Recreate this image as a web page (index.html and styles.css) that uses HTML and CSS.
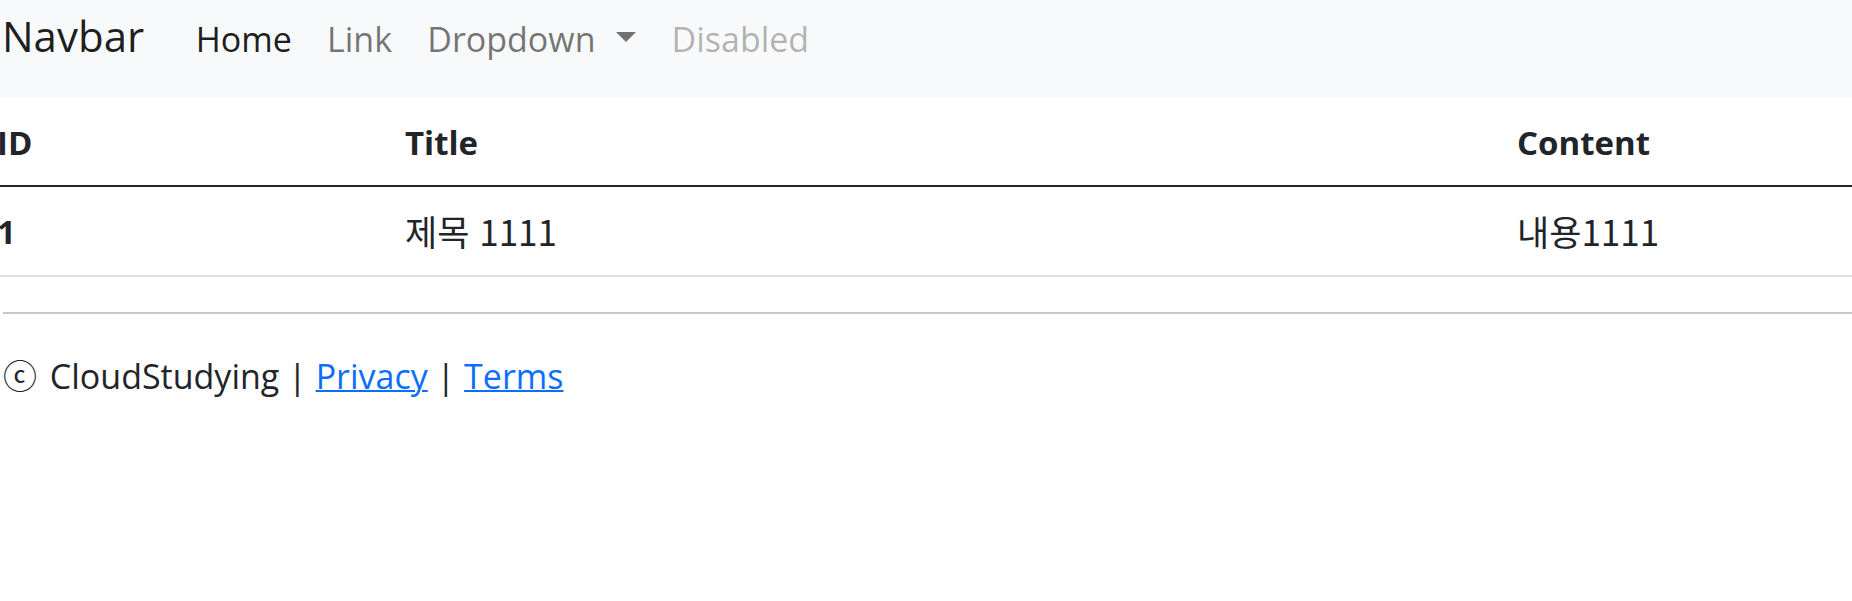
FILE: index.html
```html
<!DOCTYPE html>
<html lang="ko">
<head>
<meta charset="utf-8">
<title>Navbar</title>
<link rel="stylesheet" href="styles.css">
</head>
<body>
<nav class="navbar">
  <a class="brand" href="#">Navbar</a>
  <ul class="nav">
    <li><a class="nav-link active" href="#">Home</a></li>
    <li><a class="nav-link" href="#">Link</a></li>
    <li><a class="nav-link dropdown" href="#">Dropdown <span class="caret"></span></a></li>
    <li><a class="nav-link disabled" href="#">Disabled</a></li>
  </ul>
</nav>
<main class="content">
  <table class="table">
    <colgroup>
      <col class="col-id">
      <col class="col-title">
      <col class="col-content">
    </colgroup>
    <thead>
      <tr><th>ID</th><th>Title</th><th>Content</th></tr>
    </thead>
    <tbody>
      <tr><th class="row-id">1</th><td class="ko">제목 1111</td><td class="ko">내용1111</td></tr>
    </tbody>
  </table>
  <hr class="rule">
  <footer class="footer"><span class="copy">ⓒ</span> CloudStudying | <a href="#">Privacy</a> | <a href="#">Terms</a></footer>
</main>
</body>
</html>
```

FILE: styles.css
```css
html, body {
  margin: 0;
  padding: 0;
  background: #fff;
  overflow-x: hidden;
}
body {
  font-family: "Open Sans", "Noto Sans", "Noto Sans CJK KR", sans-serif;
  color: #212529;
}
a { text-decoration: none; }

.navbar {
  box-sizing: border-box;
  height: 97px;
  background: #f8f9fa;
  display: flex;
  align-items: baseline;
  padding: 4px 0 0 2px;
}
.brand {
  font-size: 42px;
  line-height: 1.5;
  color: rgba(0, 0, 0, 0.9);
  margin-right: 34px;
}
.nav {
  list-style: none;
  margin: 0;
  padding: 0;
  display: flex;
  align-items: baseline;
}
.nav-link {
  display: block;
  font-size: 34px;
  line-height: 1.5;
  padding: 0 17.6px;
  color: rgba(0, 0, 0, 0.55);
}
.nav-link.active { color: rgba(0, 0, 0, 0.9); }
.nav-link.disabled { color: rgba(0, 0, 0, 0.3); }
.caret {
  display: inline-block;
  width: 0;
  height: 0;
  margin-left: 12px;
  vertical-align: 10px;
  border-top: 10px solid rgba(0, 0, 0, 0.55);
  border-left: 10px solid transparent;
  border-right: 10px solid transparent;
}

.table {
  border-collapse: collapse;
  table-layout: fixed;
  width: calc(100% + 20.6px);
  margin: 0 0 0 -20.6px;
}
.col-id { width: 408px; }
.col-title { width: 1112px; }
.table th, .table td {
  text-align: left;
  vertical-align: top;
  font-size: 33px;
  line-height: 52.8px;
  padding: 19.6px 17.6px 15.6px;
  white-space: nowrap;
}
.table thead th {
  font-weight: 700;
  border-bottom: 2px solid #212529;
}
.table tbody th, .table tbody td {
  border-bottom: 2px solid #dee2e6;
  padding: 19.4px 17.6px 15.8px;
}
.table tbody th { font-weight: 700; }
.table td.ko {
  font-family: "Noto Sans CJK KR", "Open Sans", sans-serif;
  font-size: 35px;
  padding-top: 17.8px;
  padding-bottom: 17.4px;
}

.rule {
  height: 0;
  border: 0;
  border-top: 2px solid #c8c8c8;
  margin: 35px 0 0 3px;
}
.footer {
  font-size: 34px;
  line-height: 1.5;
  padding: 37px 0 0 3px;
}
.footer a {
  color: #0d6efd;
  text-decoration: underline;
  text-decoration-thickness: 2px;
}
.copy {
  font-family: "Noto Sans CJK KR", sans-serif;
  line-height: 1;
  margin-right: 4px;
}
```
